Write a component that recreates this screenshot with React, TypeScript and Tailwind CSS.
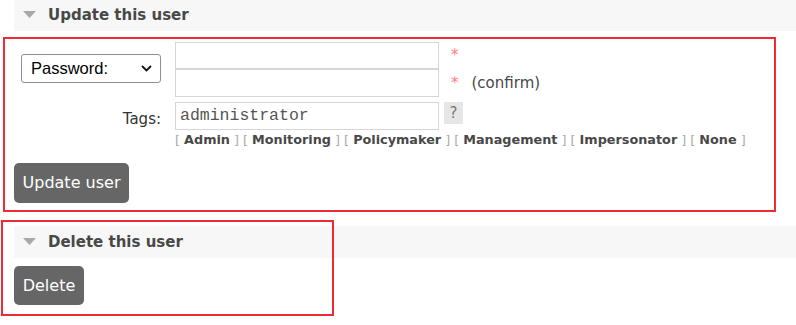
import React from "react";

const tags = ["Admin", "Monitoring", "Policymaker", "Management", "Impersonator", "None"];

function SectionHeader({ title }: { title: string }) {
  return (
    <div className="ml-[14px] flex h-[32px] items-center bg-[#f7f7f7] pl-[9px]">
      <svg width="13" height="8" viewBox="0 0 13 8" className="mr-[12px]">
        <polygon points="0,0 13,0 6.5,7" fill="#a8a8a8" />
      </svg>
      <span className="text-[15px] font-bold text-[#484848]">{title}</span>
    </div>
  );
}

function Button({ children, className }: { children: React.ReactNode; className?: string }) {
  return (
    <button
      className={
        "ml-[14px] flex items-center justify-center rounded-[5px] bg-[#666666] text-[16px] text-white " +
        (className ?? "")
      }
    >
      {children}
    </button>
  );
}

export default function App() {
  return (
    <div
      className="relative h-[325px] w-[796px] overflow-hidden bg-white text-[#484848]"
      style={{ fontFamily: '"DejaVu Sans", Verdana, sans-serif' }}
    >
      <div className="-mt-px">
        <SectionHeader title="Update this user" />
      </div>

      <div className="mt-[11px] flex">
        <div className="flex w-[175px] items-center pb-[2px] pl-[21px]">
          <div
            className="flex h-[29px] w-[140px] items-center justify-between rounded-[3px] border border-[#8f8f8f] bg-white pl-[9px] pr-[8px] text-[16.5px] text-black"
            style={{ fontFamily: '"Liberation Sans", Arial, sans-serif' }}
          >
            <span>Password:</span>
            <svg width="11" height="7" viewBox="0 0 11 7">
              <polyline points="1,1 5.5,5.5 10,1" fill="none" stroke="#111" strokeWidth="1.8" />
            </svg>
          </div>
        </div>
        <div className="flex flex-col">
          <div className="flex items-center">
            <div className="h-[27px] w-[264px] border border-[#d6d6d6] bg-white" />
            <span className="ml-[12px] text-[15px] text-[#ff8080]">*</span>
          </div>
          <div className="flex items-center">
            <div className="h-[28px] w-[264px] border border-[#d6d6d6] bg-white" />
            <span className="ml-[12px] text-[15px] text-[#ff8080]">*</span>
            <span className="ml-[13px] text-[15px] text-[#484848]">(confirm)</span>
          </div>
        </div>
      </div>

      <div className="mt-[5px] flex">
        <div className="flex w-[175px] justify-end pr-[14px] pt-[6px] text-[15px] text-[#333]">Tags:</div>
        <div className="flex flex-col">
          <div className="flex items-start">
            <div
              className="flex h-[28px] w-[264px] items-center border border-[#d6d6d6] bg-white pl-[4px] text-[16.5px] text-[#555]"
              style={{ fontFamily: '"Liberation Mono", "Courier New", monospace' }}
            >
              administrator
            </div>
            <div className="ml-[5px] flex h-[22px] w-[19px] items-center justify-center bg-[#e6e6e6] text-[15px] text-[#777]">
              ?
            </div>
          </div>
          <div className="mt-[2px] flex text-[12.8px] leading-[16px]">
            {tags.map((t, i) => (
              <span key={t} className={i > 0 ? "ml-[4px]" : ""}>
                <span className="text-[#aaa]">[ </span>
                <span className="font-bold text-[#484848]">{t}</span>
                <span className="text-[#aaa]"> ]</span>
              </span>
            ))}
          </div>
        </div>
      </div>

      <Button className="mt-[15px] h-[40px] w-[115px]">Update user</Button>

      <div className="mt-[23px]">
        <SectionHeader title="Delete this user" />
      </div>

      <Button className="mt-[8px] h-[39px] w-[70px]">Delete</Button>

      <div className="pointer-events-none absolute left-[3px] top-[37px] h-[175px] w-[773px] border-2 border-[#ee2a35]" />
      <div className="pointer-events-none absolute left-[1px] top-[220px] h-[96px] w-[333px] border-2 border-[#ee2a35]" />
    </div>
  );
}
